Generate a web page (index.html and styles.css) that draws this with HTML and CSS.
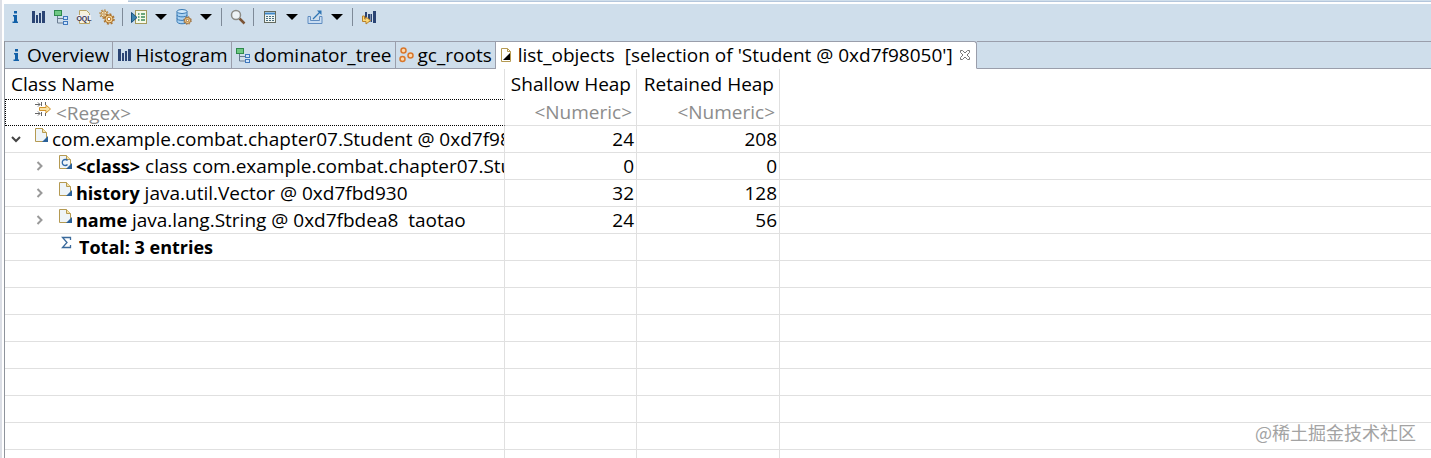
FILE: index.html
```html
<!DOCTYPE html>
<html lang="en">

<head>
  <meta charset="UTF-8">
  <meta name="viewport" content="width=device-width, initial-scale=1.0">
  <title>Memory Analyzer - list_objects</title>
  <link rel="stylesheet" href="styles.css">
</head>

<body>
  <!-- shared icons -->
  <svg class="icon-defs" aria-hidden="true">
    <symbol id="info" viewBox="0 0 16 16">
      <path d="M7 2h3v2.500H7zM6 6h4v6.500h1V14H5.500v-1.500H7v-5H6z" fill="#1260a8" />
    </symbol>
    <symbol id="bars" viewBox="0 0 16 16">
      <path d="M2 2h3v12H2zM6 6h2v8H6zM9 4h2v10H9zM12 2h3v12h-3z" fill="#2a4474" />
    </symbol>
    <symbol id="tree" viewBox="0 0 16 16">
      <path d="M4.500 7v7H10M4.500 9.500H10" fill="none" stroke="#6a7c90" />
      <rect x="1.500" y="1.500" width="7" height="5" fill="#6fc883" stroke="#2f8a4c" />
      <rect x="10.500" y="7.500" width="4" height="3" fill="#cfe4fa" stroke="#3f78bd" />
      <rect x="10.500" y="12.500" width="4" height="3" fill="#cfe4fa" stroke="#3f78bd" />
    </symbol>
    <symbol id="roots" viewBox="0 0 16 16">
      <g fill="#fbd9ae" stroke="#d9772b" stroke-width="1.500">
        <circle cx="4.500" cy="3.500" r="2.500" />
        <circle cx="3.500" cy="12" r="2.500" />
        <circle cx="11.500" cy="8.500" r="2.500" />
      </g>
    </symbol>
    <symbol id="page" viewBox="0 0 16 16">
      <path d="M1.500 1.500h7l4 4v9h-11z" fill="#eef4f8" stroke="#b59a52" />
      <path d="M8.500 1.500v4h4" fill="#f6e3a8" stroke="#b59a52" />
      <path d="M14 9v6H8z" fill="#2b6199" />
    </symbol>
    <symbol id="drop" viewBox="0 0 12 6">
      <path d="M0 0h12L6 6z" fill="#000" />
    </symbol>
    <symbol id="closed" viewBox="0 0 16 16">
      <path d="M5.500 4l4 4-4 4" fill="none" stroke="#999" stroke-width="2" />
    </symbol>
  </svg>

  <div class="view">
    <div class="top-strip"></div>
    <div class="toolbar">
      <button type="button" class="tool" title="Overview"><svg><use href="#info" /></svg></button>
      <button type="button" class="tool" title="Histogram"><svg><use href="#bars" /></svg></button>
      <button type="button" class="tool" title="Dominator Tree"><svg><use href="#tree" /></svg></button>
      <button type="button" class="tool" title="OQL">
        <svg viewBox="0 0 16 16">
          <path d="M3.500 1.500h7l3 3v10h-10z" fill="#f7f2df" stroke="#b9a566" />
          <rect x="1" y="6" width="14" height="6" fill="#efeff2" />
          <text x="8" y="12" class="oql">OQL</text>
        </svg>
      </button>
      <button type="button" class="tool" title="Thread Overview">
        <svg viewBox="0 0 16 16">
          <circle cx="5" cy="5" r="3" fill="#f8e6bd" stroke="#b98a48" />
          <circle cx="5" cy="5" r="4" fill="none" stroke="#b98a48" stroke-width="1.500" stroke-dasharray="1.500 1.600" />
          <circle cx="5" cy="5" r="1.200" fill="#fff" stroke="#b98a48" />
          <circle cx="10" cy="10" r="4" fill="#f9d795" stroke="#ad7430" />
          <circle cx="10" cy="10" r="5" fill="none" stroke="#ad7430" stroke-width="1.500" stroke-dasharray="2 1.900" />
          <circle cx="10" cy="10" r="1.800" fill="#fff" stroke="#ad7430" />
        </svg>
      </button>
      <span class="separator"></span>
      <button type="button" class="tool" title="Run Expert System Test">
        <svg viewBox="0 0 16 16">
          <rect x="4.500" y="1.500" width="11" height="13" fill="#f5f9e8" stroke="#a39a5b" />
          <path d="M7 5h1.500M7 8h1.500M7 11h1.500M10 5h4M10 8h4M10 11h4" stroke="#3d8a58" stroke-width="1.300" />
          <path d="M.5 3.500L6 8.500.5 13.500z" fill="#3b83ae" stroke="#1b527f" />
        </svg>
      </button>
      <button type="button" class="drop" aria-label="Reports menu"><svg><use href="#drop" /></svg></button>
      <button type="button" class="tool" title="Query Browser">
        <svg viewBox="0 0 16 16">
          <path d="M1 2.500v10c0 3 10 3 10 0v-10" fill="#a9d2f3" stroke="#3778b3" />
          <ellipse cx="6" cy="2.500" rx="5" ry="2" fill="#d5ebfb" stroke="#3778b3" />
          <path d="M1 6c0 2.500 10 2.500 10 0M1 9.500c0 2.500 10 2.500 10 0" fill="none" stroke="#3778b3" />
          <circle cx="11.500" cy="11.500" r="3" fill="#f9d795" stroke="#9c682f" />
          <circle cx="11.500" cy="11.500" r="3.800" fill="none" stroke="#9c682f" stroke-dasharray="1.500 1.500" />
          <circle cx="11.500" cy="11.500" r="1.200" fill="#fff" stroke="#9c682f" />
        </svg>
      </button>
      <button type="button" class="drop" aria-label="Query menu"><svg><use href="#drop" /></svg></button>
      <span class="separator"></span>
      <button type="button" class="tool" title="Find Object">
        <svg viewBox="0 0 16 16">
          <path d="M9.500 9.500l5 5" stroke="#7b5436" stroke-width="2.500" />
          <circle cx="6" cy="6" r="4.500" fill="#edf3f6" stroke="#8b8b86" stroke-width="1.500" />
        </svg>
      </button>
      <span class="separator"></span>
      <button type="button" class="tool" title="Calculate Retained Size">
        <svg viewBox="0 0 16 16">
          <rect x="2.500" y="2.500" width="11" height="11" fill="#eef6f4" stroke="#656b5f" />
          <path d="M3 4.500h10" stroke="#3e86c8" stroke-width="2" />
          <path d="M4 7.500h8M4 9.500h8M4 11.500h8" stroke="#4c6e80" stroke-dasharray="2 1" />
        </svg>
      </button>
      <button type="button" class="drop" aria-label="Calculate menu"><svg><use href="#drop" /></svg></button>
      <button type="button" class="tool" title="Export">
        <svg viewBox="0 0 16 16">
          <path d="M1 7.500h2.500v4h9v-4H15v7H1z" fill="#c9ddf2" stroke="#5f8cc0" />
          <path d="M6 10l7-7" stroke="#2e74b3" stroke-width="1.200" />
          <path d="M10 1.500h4.500V6z" fill="#2e74b3" />
        </svg>
      </button>
      <button type="button" class="drop" aria-label="Export menu"><svg><use href="#drop" /></svg></button>
      <span class="separator"></span>
      <button type="button" class="tool" title="Compare">
        <svg viewBox="0 0 16 16">
          <path d="M4 3h2v6H4zM7 5h2v8H7zM9.500 5h1.500v8H9.500zM12 2h3v12h-3z" fill="#2a4474" />
          <path d="M1.500 7v5.500H5V15l4.500-3.500L5 8v2H3.500V7z" fill="#fbd97a" stroke="#b9822b" />
        </svg>
      </button>
    </div>

    <div class="pane">
      <div class="tabs" role="tablist">
        <button type="button" class="tab" role="tab"><svg><use href="#info" /></svg>Overview</button>
        <button type="button" class="tab" role="tab"><svg><use href="#bars" /></svg>Histogram</button>
        <button type="button" class="tab" role="tab"><svg><use href="#tree" /></svg>dominator_tree</button>
        <button type="button" class="tab" role="tab"><svg><use href="#roots" /></svg>gc_roots</button>
        <button type="button" class="tab active" role="tab" aria-selected="true">
          <svg viewBox="0 0 16 16">
            <path d="M2.500 1.500h6l3 3v10h-9z" fill="#fff" stroke="#b59a52" />
            <path d="M8.500 1.500v3h3" fill="none" stroke="#b59a52" />
            <path d="M11 6v7H4z" fill="#000" />
          </svg>list_objects&nbsp; [selection of 'Student @ 0xd7f98050']
          <svg class="close" viewBox="0 0 12 12">
            <path d="M1.500 1.500h2L6 4l2.500-2.500h2v2L8 6l2.500 2.500v2h-2L6 8l-2.500 2.500h-2v-2L4 6 1.500 3.500z" fill="#fff" stroke="#777" />
          </svg>
        </button>
        <span class="tab-rest"></span>
      </div>

      <table class="objects">
        <colgroup>
          <col class="col-name">
          <col class="col-shallow">
          <col class="col-retained">
          <col>
        </colgroup>
        <thead>
          <tr>
            <th>Class Name</th>
            <th class="num">Shallow Heap</th>
            <th class="num">Retained Heap</th>
            <th></th>
          </tr>
        </thead>
        <tbody>
          <tr class="filter">
            <td>
              <div class="cell">
                <svg viewBox="0 0 16 16">
                  <path d="M0 3.500h5M0 12.500h5M3 1.500l2 2-2 2M3 10.500l2 2-2 2M6.500 1v4M6.500 11v4M10.500 1v3M10.500 12v3" fill="none" stroke="#666" />
                  <path d="M4.500 6.500H11V4l4.500 4-4.500 4V9.500H4.500z" fill="#fbe3a4" stroke="#d0932c" />
                </svg>
                <input type="text" placeholder="&lt;Regex&gt;" aria-label="Filter class name">
              </div>
            </td>
            <td><input type="text" placeholder="&lt;Numeric&gt;" aria-label="Filter shallow heap"></td>
            <td><input type="text" placeholder="&lt;Numeric&gt;" aria-label="Filter retained heap"></td>
            <td></td>
          </tr>
          <tr>
            <td>
              <div class="cell root">
                <button type="button" class="twisty" aria-label="Collapse">
                  <svg viewBox="0 0 16 16"><path d="M4 6l4 4 4-4" fill="none" stroke="#444" stroke-width="2" /></svg>
                </button>
                <svg><use href="#page" /></svg>
                <span>com.example.combat.chapter07.Student @ 0xd7f98050</span>
              </div>
            </td>
            <td class="num">24</td>
            <td class="num">208</td>
            <td></td>
          </tr>
          <tr>
            <td>
              <div class="cell child">
                <button type="button" class="twisty" aria-label="Expand"><svg><use href="#closed" /></svg></button>
                <svg viewBox="0 0 16 16">
                  <use href="#page" />
                  <path d="M9.500 6.500a3 3 0 1 0 0 4" fill="none" stroke="#2d67a8" stroke-width="1.300" />
                </svg>
                <span><b>&lt;class&gt;</b> class com.example.combat.chapter07.Student</span>
              </div>
            </td>
            <td class="num">0</td>
            <td class="num">0</td>
            <td></td>
          </tr>
          <tr>
            <td>
              <div class="cell child">
                <button type="button" class="twisty" aria-label="Expand"><svg><use href="#closed" /></svg></button>
                <svg><use href="#page" /></svg>
                <span><b>history</b> java.util.Vector @ 0xd7fbd930</span>
              </div>
            </td>
            <td class="num">32</td>
            <td class="num">128</td>
            <td></td>
          </tr>
          <tr>
            <td>
              <div class="cell child">
                <button type="button" class="twisty" aria-label="Expand"><svg><use href="#closed" /></svg></button>
                <svg><use href="#page" /></svg>
                <span><b>name</b> java.lang.String @ 0xd7fbdea8&nbsp; taotao</span>
              </div>
            </td>
            <td class="num">24</td>
            <td class="num">56</td>
            <td></td>
          </tr>
          <tr>
            <td>
              <div class="cell total">
                <svg viewBox="0 0 16 16"><path d="M11.500 5V2.500h-8l4.500 5-4.500 5h8V10" fill="none" stroke="#3a6a9c" stroke-width="1.300" /></svg>
                <b>Total: 3 entries</b>
              </div>
            </td>
            <td></td>
            <td></td>
            <td></td>
          </tr>
          <tr><td></td><td></td><td></td><td></td></tr>
          <tr><td></td><td></td><td></td><td></td></tr>
          <tr><td></td><td></td><td></td><td></td></tr>
          <tr><td></td><td></td><td></td><td></td></tr>
          <tr><td></td><td></td><td></td><td></td></tr>
          <tr><td></td><td></td><td></td><td></td></tr>
          <tr><td></td><td></td><td></td><td></td></tr>
          <tr><td></td><td></td><td></td><td></td></tr>
        </tbody>
      </table>
    </div>
  </div>

  <div class="watermark">@稀土掘金技术社区</div>
</body>

</html>
```
FILE: styles.css
```css
* {
  box-sizing: border-box;
}

body {
  margin: 0;
  height: 100vh;
  overflow: hidden;
  background-color: #fff;
  border-left: 2px solid #dcdfe6;
  font-family: "Open Sans", "Noto Sans CJK SC", sans-serif;
  font-size: 19px;
  color: #000;
}

button {
  padding: 0;
  border: none;
  background: none;
  font: inherit;
  color: inherit;
}

b {
  font-size: 18px;
}

svg {
  display: block;
  flex: none;
  width: 16px;
  height: 16px;
}

.icon-defs {
  position: absolute;
  width: 0;
  height: 0;
}

.view {
  display: flex;
  flex-direction: column;
  height: 100%;
  margin-left: 2px;
  overflow: hidden;
}

.top-strip {
  flex: none;
  height: 2px;
  margin: 0 0 2px 124px;
  background-color: #cfdeeb;
  border-bottom: 1px solid #b4c6dc;
}

/* toolbar */
.toolbar {
  display: flex;
  flex: none;
  align-items: center;
  height: 37px;
  padding: 0 3px 11px;
  background-color: #cfdeeb;
}

.tool {
  width: 16px;
  margin-right: 7px;
}

.drop {
  width: 12px;
  margin: 0 9px 0 1px;
}

.drop svg {
  width: 12px;
  height: 6px;
}

.separator {
  width: 1px;
  height: 18px;
  margin-right: 8px;
  background-color: #7e8a98;
}

.oql {
  font: bold 7px "Liberation Sans", sans-serif;
  text-anchor: middle;
  fill: #3b3550;
}

.pane {
  flex: 1;
  min-height: 0;
  border-left: 1px solid #8f949c;
  overflow: hidden;
}

/* tabs */
.tabs {
  display: flex;
  height: 28px;
  background-color: #cfdeeb;
}

.tab {
  display: flex;
  align-items: center;
  gap: 3px;
  padding: 0 3px;
  border: solid #9a9eab;
  border-width: 1px 1px 1px 0;
  white-space: nowrap;
}

.tab.active {
  padding-right: 5px;
  background-color: #fff;
  border-bottom-color: #fff;
  border-radius: 0 3px 0 0;
}

.tab .close {
  width: 12px;
  height: 12px;
  margin-left: 3px;
}

.tab-rest {
  flex: 1;
  border: solid #9a9eab;
  border-width: 1px 0;
}

/* object table */
.objects {
  width: 100%;
  table-layout: fixed;
  border-collapse: separate;
  border-spacing: 0;
  line-height: 26px;
}

.col-name {
  width: 500px;
}

.col-shallow {
  width: 132px;
}

.col-retained {
  width: 143px;
}

th,
td {
  height: 27px;
  padding: 0;
  border: solid #e0e0e0;
  border-width: 0 1px 1px 0;
  overflow: hidden;
  white-space: nowrap;
}

th:last-child,
td:last-child {
  border-right: none;
}

th {
  height: 30px;
  padding: 0 6px;
  border-bottom: none;
  font-weight: normal;
  text-align: left;
}

.num {
  padding-right: 2px;
  text-align: right;
}

th.num {
  padding-left: 0;
  padding-right: 5px;
}

.filter td:first-child {
  border-bottom: 1px dotted #000;
  border-top: 1px dotted #000;
  border-left: 1px dotted #000;
}

.filter input {
  display: block;
  width: 100%;
  height: 25px;
  padding: 0 4px;
  border: none;
  outline: none;
  background: none;
  font: inherit;
  text-align: right;
}

.filter .cell input {
  text-align: left;
}

.filter input::placeholder {
  color: #8c8c8c;
  opacity: 1;
}

.cell {
  display: flex;
  align-items: center;
  gap: 2px;
  height: 26px;
  overflow: hidden;
}

.cell > svg {
  margin-bottom: 8px;
}

.filter .cell {
  gap: 1px;
  height: 25px;
  padding-left: 29px;
}

.twisty {
  width: 16px;
}

.root {
  padding-left: 3px;
}

.child {
  padding-left: 27px;
}

.root > svg,
.child > svg {
  margin-left: 8px;
}

.total {
  gap: 4px;
  padding-left: 54px;
}

.watermark {
  position: absolute;
  right: 15px;
  bottom: 13px;
  font-family: "Noto Sans CJK SC", sans-serif;
  font-size: 18px;
  color: #a3a3a3;
}
```
